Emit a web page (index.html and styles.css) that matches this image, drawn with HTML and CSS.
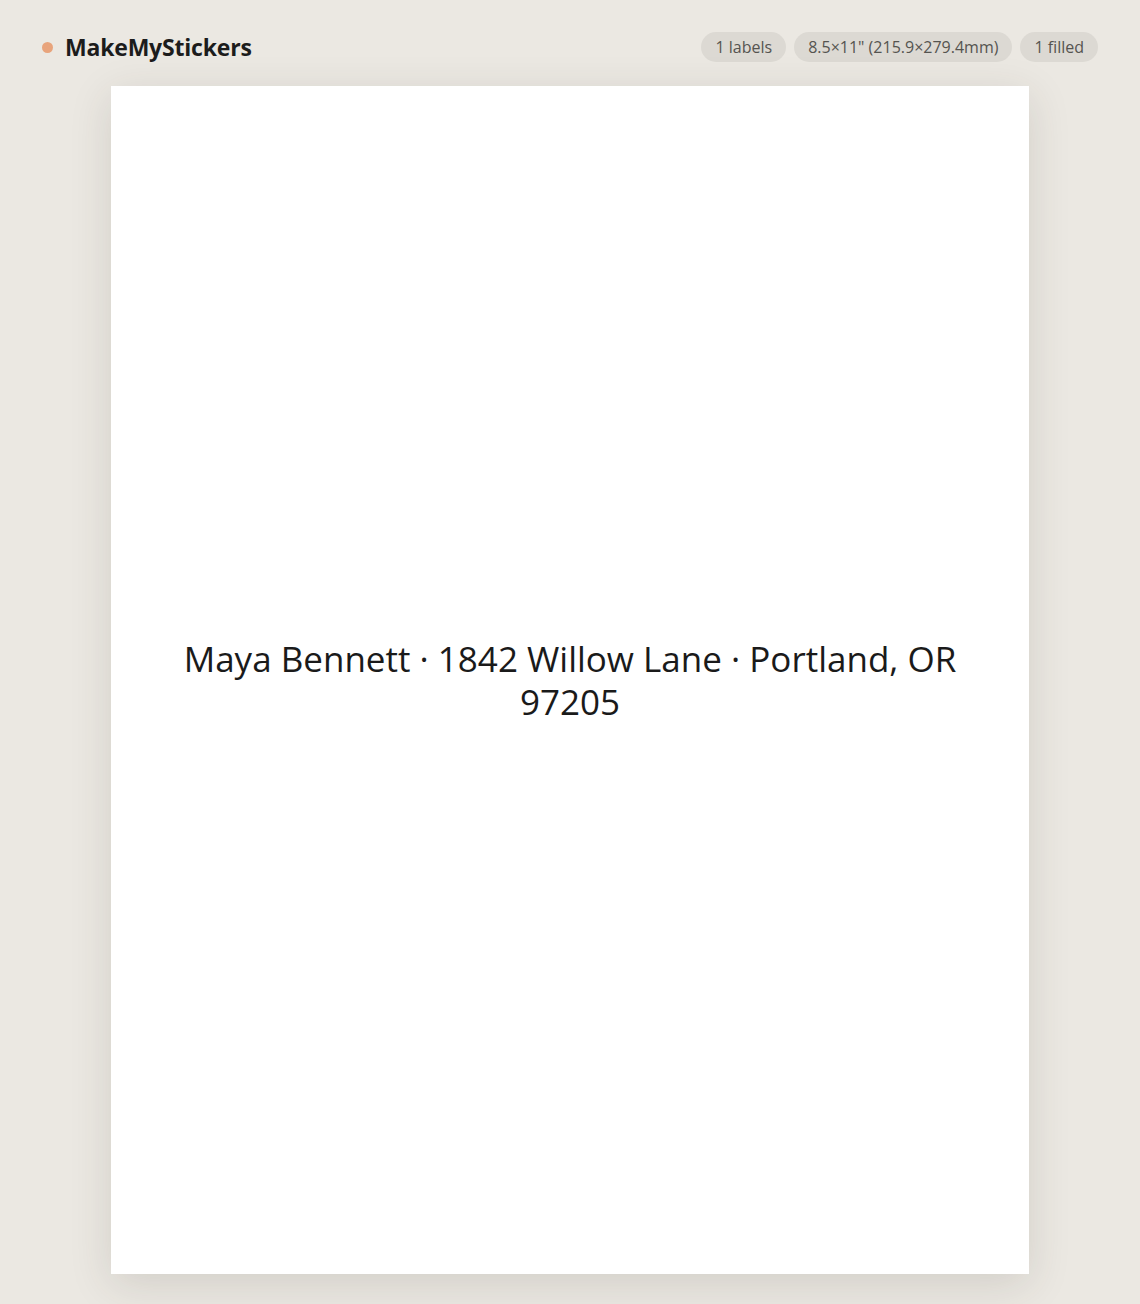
FILE: index.html
```html
<!DOCTYPE html>
<html lang="en">
<head>
<meta charset="utf-8">
<title>MakeMyStickers</title>
<link rel="stylesheet" href="styles.css">
</head>
<body>
<header class="topbar">
  <div class="brand">
    <span class="brand-dot"></span>
    <span class="brand-name">MakeMyStickers</span>
  </div>
  <div class="stats">
    <span class="pill">1 labels</span>
    <span class="pill">8.5×11" (215.9×279.4mm)</span>
    <span class="pill">1 filled</span>
  </div>
</header>
<main class="stage">
  <section class="sheet">
    <div class="label">Maya Bennett · 1842 Willow Lane · Portland, OR 97205</div>
  </section>
</main>
</body>
</html>
```
FILE: styles.css
```css
html, body {
  margin: 0;
  padding: 0;
}
body {
  background: #ebe8e2;
  font-family: "Open Sans", "Noto Sans", "Liberation Sans", sans-serif;
  color: #1b1b1b;
  min-height: 1304px;
}
.topbar {
  display: flex;
  align-items: center;
  justify-content: space-between;
  padding: 32px 42px 0 42px;
  height: 30px;
}
.brand {
  display: flex;
  align-items: center;
  gap: 12px;
}
.brand-dot {
  width: 11px;
  height: 11px;
  border-radius: 50%;
  background: #e8a47c;
}
.brand-name {
  font-size: 23px;
  font-weight: 700;
  color: #1c1c1c;
  letter-spacing: -0.2px;
}
.stats {
  display: flex;
  gap: 8px;
}
.pill {
  display: flex;
  align-items: center;
  height: 30px;
  padding: 0 14px;
  border-radius: 15px;
  background: #dcd9d3;
  color: #555450;
  font-size: 16px;
}
.stage {
  display: flex;
  justify-content: center;
  padding-top: 24px;
}
.sheet {
  width: 918px;
  height: 1188px;
  background: #ffffff;
  box-shadow: 0 10px 40px rgba(60, 50, 40, 0.14);
  display: flex;
  align-items: center;
  justify-content: center;
  box-sizing: border-box;
  padding: 0 40px;
}
.label {
  font-size: 35px;
  line-height: 43px;
  text-align: center;
  color: #1a1a1a;
}
```
